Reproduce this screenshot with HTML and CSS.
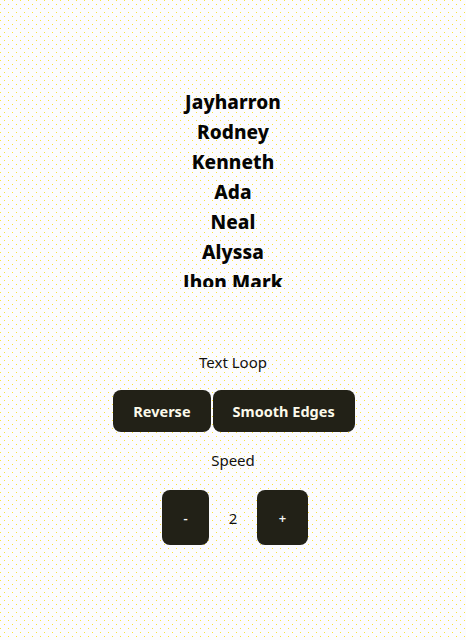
FILE: index.html
```html
<!DOCTYPE html>
<html lang="en">
<head>
<meta charset="utf-8">
<title>Text Loop</title>
<link rel="stylesheet" href="styles.css">
</head>
<body>
<main class="page">
  <div class="loop">
    <ul class="names">
      <li>Jayharron</li>
      <li>Rodney</li>
      <li>Kenneth</li>
      <li>Ada</li>
      <li>Neal</li>
      <li>Alyssa</li>
      <li>Jhon Mark</li>
    </ul>
  </div>
  <p class="label label-title">Text Loop</p>
  <div class="toggles">
    <button class="btn">Reverse</button>
    <button class="btn">Smooth Edges</button>
  </div>
  <p class="label label-speed">Speed</p>
  <div class="speed">
    <button class="btn btn-step">-</button>
    <span class="speed-value">2</span>
    <button class="btn btn-step">+</button>
  </div>
</main>
</body>
</html>
```
FILE: styles.css
```css
html, body {
  margin: 0;
  padding: 0;
}
body {
  width: 466px;
  height: 640px;
  overflow: hidden;
  font-family: "Noto Sans", "Open Sans", sans-serif;
  color: #111;
  background-color: #fcfcfe;
  background-image:
    radial-gradient(circle at 4.5px 0.5px, #fbe23c 0.55px, transparent 0.7px),
    radial-gradient(circle at 0.5px 4.5px, #fbe23c 0.55px, transparent 0.7px);
  background-size: 8px 8px, 8px 8px;
  background-position: 0 0, 0 0;
}
.page {
  display: flex;
  flex-direction: column;
  align-items: center;
  padding-top: 87px;
}
.loop {
  height: 200px;
  overflow: hidden;
}
.names {
  list-style: none;
  margin: 0;
  padding: 0;
  text-align: center;
}
.names li {
  font-size: 19px;
  font-weight: 800;
  line-height: 30px;
  color: #050505;
  letter-spacing: 0.1px;
}
.label {
  margin: 0;
  font-size: 15px;
  line-height: 20px;
  color: #111;
}
.label-title {
  margin-top: 65px;
}
.toggles {
  display: flex;
  gap: 2px;
  margin-top: 18px;
}
.btn {
  font-family: inherit;
  border: none;
  background: #222117;
  color: #fbf9ea;
  border-radius: 8px;
  font-size: 14.5px;
  font-weight: 700;
  height: 42px;
  padding: 0 20px;
  cursor: pointer;
}
.toggles .btn:first-child {
  margin-left: 2px;
}
.label-speed {
  margin-top: 18px;
}
.speed {
  display: flex;
  align-items: center;
  margin-top: 20px;
  margin-left: 4px;
}
.btn-step {
  height: 55px;
  width: 47px;
  padding: 0;
  font-size: 13px;
  font-weight: 600;
  color: #f5f5f5;
}
.btn-step:last-child {
  width: 51px;
}
.speed-value {
  width: 48px;
  text-align: center;
  font-size: 15px;
  color: #111;
}
```
